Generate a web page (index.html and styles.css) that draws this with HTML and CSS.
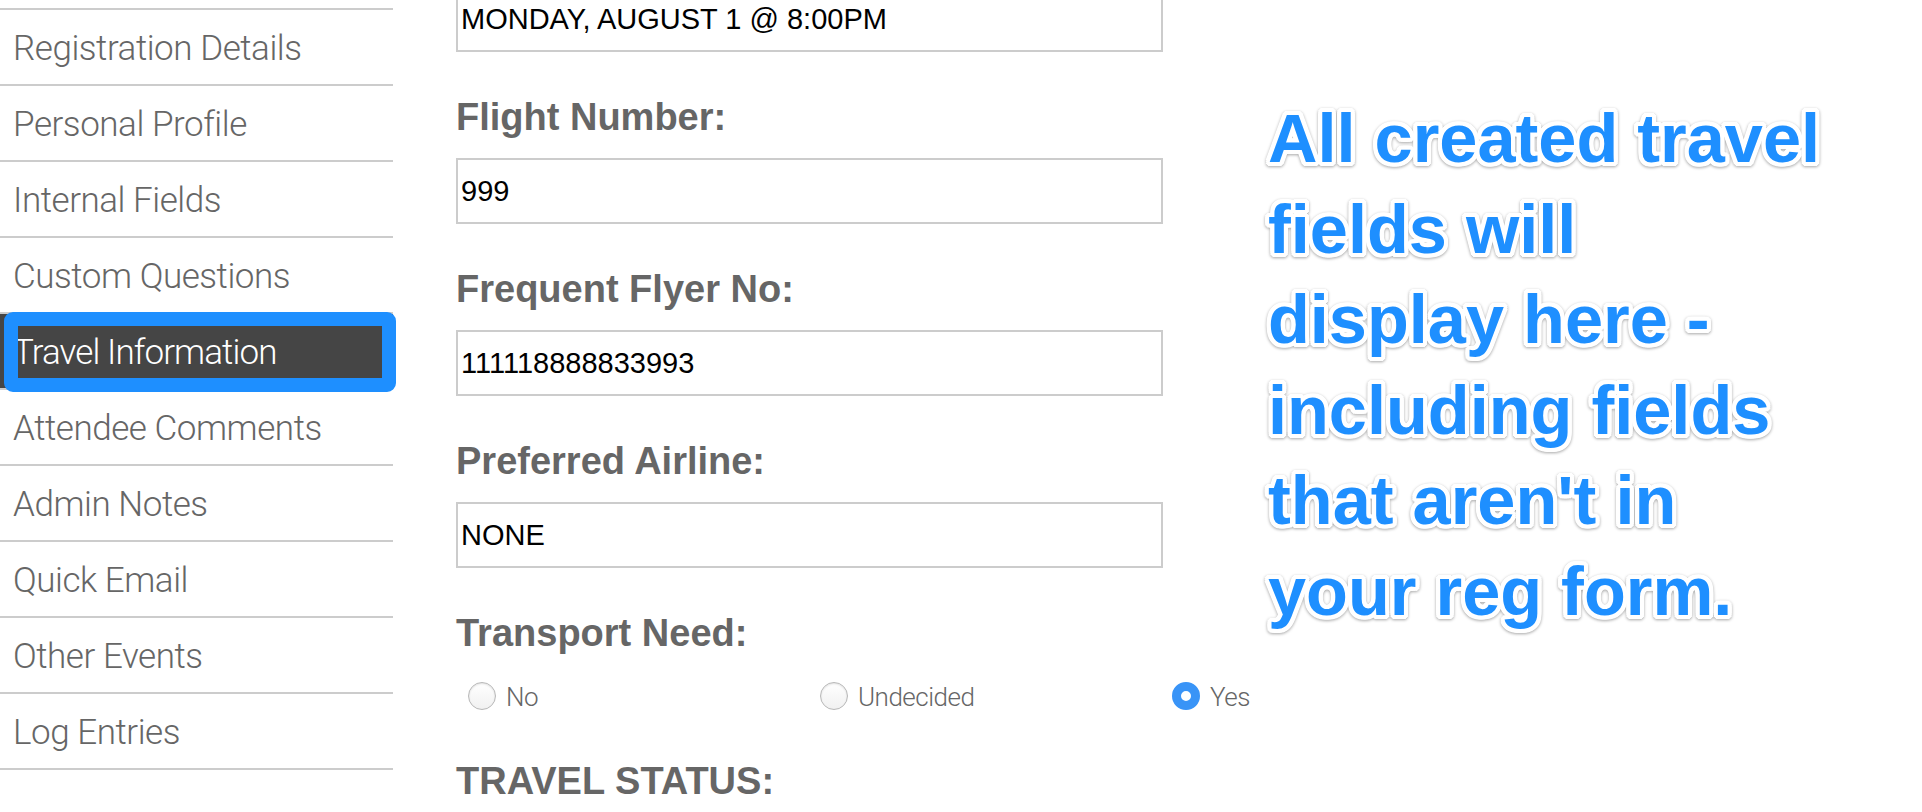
FILE: index.html
```html
<!DOCTYPE html>
<html lang="en">
<head>
<meta charset="utf-8">
<title>Travel Information</title>
<link rel="stylesheet" href="styles.css">
</head>
<body>
<div class="page">
  <nav class="sidebar">
    <ul class="nav">
      <li class="nav-item">Registration Details</li>
      <li class="nav-item">Personal Profile</li>
      <li class="nav-item">Internal Fields</li>
      <li class="nav-item">Custom Questions</li>
      <li class="nav-item active">Travel Information<span class="callout-frame"></span></li>
      <li class="nav-item">Attendee Comments</li>
      <li class="nav-item">Admin Notes</li>
      <li class="nav-item">Quick Email</li>
      <li class="nav-item">Other Events</li>
      <li class="nav-item">Log Entries</li>
    </ul>
  </nav>

  <main class="form">
    <div class="field">
      <div class="input">MONDAY, AUGUST 1 @ 8:00PM</div>
    </div>
    <div class="field">
      <div class="label">Flight Number:</div>
      <div class="input">999</div>
    </div>
    <div class="field">
      <div class="label">Frequent Flyer No:</div>
      <div class="input">111118888833993</div>
    </div>
    <div class="field">
      <div class="label">Preferred Airline:</div>
      <div class="input">NONE</div>
    </div>
    <div class="field field-radio">
      <div class="label">Transport Need:</div>
      <div class="radios">
        <label class="radio"><span class="dot"></span><span class="radio-text">No</span></label>
        <label class="radio"><span class="dot"></span><span class="radio-text">Undecided</span></label>
        <label class="radio"><span class="dot checked"></span><span class="radio-text">Yes</span></label>
      </div>
    </div>
    <div class="field">
      <div class="label">TRAVEL STATUS:</div>
    </div>
  </main>

  <div class="annotation">All created travel<br>fields will<br>display here -<br>including fields<br>that aren't in<br>your reg form.</div>
</div>
</body>
</html>
```

FILE: styles.css
```css
* { box-sizing: border-box; }

html, body {
  margin: 0;
  padding: 0;
  background: #ffffff;
  overflow: hidden;
}

body {
  width: 1922px;
  height: 812px;
  font-family: "Liberation Sans", Arial, Helvetica, sans-serif;
}

.page {
  display: flex;
  align-items: flex-start;
  position: relative;
  height: 812px;
}

/* ---------- Sidebar ---------- */
.sidebar {
  width: 393px;
  flex: 0 0 393px;
  margin-top: 8px;
}

.nav {
  list-style: none;
  margin: 0;
  padding: 0;
  border-top: 2px solid #cccccc;
}

.nav-item {
  position: relative;
  height: 76px;
  padding: 4px 0 0 13px;
  line-height: 70px;
  font-family: "Roboto", "Liberation Sans", Arial, sans-serif;
  font-weight: 300;
  font-size: 35px;
  letter-spacing: -0.45px;
  color: #666666;
  border-bottom: 2px solid #cccccc;
  white-space: nowrap;
}

.nav-item.active {
  background: #454545;
  color: #ffffff;
  letter-spacing: -0.9px;
}

.callout-frame {
  position: absolute;
  left: 4px;
  top: -2px;
  width: 392px;
  height: 80px;
  border: 14px solid #1e8fff;
  border-radius: 9px;
}

/* ---------- Form ---------- */
.form {
  margin-left: 63px;
  margin-top: -14px;
  width: 707px;
  flex: 0 0 707px;
}

.field {
  margin-bottom: 43px;
}

.label {
  font-size: 38px;
  line-height: 44px;
  font-weight: 700;
  color: #666666;
  margin-bottom: 19px;
  white-space: nowrap;
}

.input {
  height: 66px;
  border: 2px solid #cccccc;
  padding: 0 0 0 3px;
  font-size: 29px;
  line-height: 62px;
  color: #000000;
  white-space: nowrap;
}

.field-radio .label {
  margin-bottom: 0;
}

.field-radio {
  margin-bottom: 49px;
}

.radios {
  display: grid;
  grid-template-columns: 352px 352px 352px;
  padding-left: 12px;
  margin-top: 27px;
  width: 1080px;
  height: 28px;
}

.radio {
  display: flex;
  align-items: center;
  height: 28px;
  gap: 10px;
}

.dot {
  width: 28px;
  height: 28px;
  flex: 0 0 28px;
  border-radius: 50%;
  border: 1.5px solid #b8b8b8;
  background: linear-gradient(#ffffff, #f1f1f1);
  box-shadow: inset 0 1px 2px rgba(0, 0, 0, 0.12);
}

.dot.checked {
  border: 9.5px solid #3994f7;
  background: #ffffff;
  box-shadow: none;
}

.radio-text {
  font-family: "Roboto", "Liberation Sans", Arial, sans-serif;
  font-weight: 300;
  font-size: 26px;
  line-height: 28px;
  letter-spacing: -0.5px;
  color: #666666;
  position: relative;
  top: 1px;
}

/* ---------- Annotation callout ---------- */
.annotation {
  position: absolute;
  left: 1268px;
  top: 94px;
  font-family: "Liberation Sans", Arial, Helvetica, sans-serif;
  font-weight: 700;
  font-size: 68.5px;
  line-height: 90.5px;
  color: #1e8fff;
  white-space: nowrap;
  text-shadow:
    4px 0 0 #fff, -4px 0 0 #fff, 0 4px 0 #fff, 0 -4px 0 #fff,
    3px 3px 0 #fff, -3px 3px 0 #fff, 3px -3px 0 #fff, -3px -3px 0 #fff,
    4px 2px 0 #fff, -4px 2px 0 #fff, 4px -2px 0 #fff, -4px -2px 0 #fff,
    2px 4px 0 #fff, -2px 4px 0 #fff, 2px -4px 0 #fff, -2px -4px 0 #fff;
  filter: drop-shadow(0 1.5px 1.5px rgba(0, 0, 0, 0.35));
}
```
